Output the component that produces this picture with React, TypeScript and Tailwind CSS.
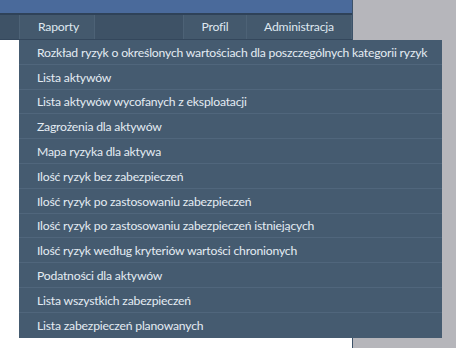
import React from 'react'

const items = [
  'Rozkład ryzyk o określonych wartościach dla poszczególnych kategorii ryzyk',
  'Lista aktywów',
  'Lista aktywów wycofanych z eksploatacji',
  'Zagrożenia dla aktywów',
  'Mapa ryzyka dla aktywa',
  'Ilość ryzyk bez zabezpieczeń',
  'Ilość ryzyk po zastosowaniu zabezpieczeń',
  'Ilość ryzyk po zastosowaniu zabezpieczeń istniejących',
  'Ilość ryzyk według kryteriów wartości chronionych',
  'Podatności dla aktywów',
  'Lista wszystkich zabezpieczeń',
  'Lista zabezpieczeń planowanych',
]

export default function App() {
  return (
    <div
      className="relative flex h-[348px] w-[456px] overflow-hidden bg-[#b6b6bb] text-[12.2px] tracking-[-0.2px]"
      style={{ fontFamily: 'Lato, "Liberation Sans", sans-serif' }}
    >
      <div className="flex w-[353px] flex-col border-r border-[#3d5268] bg-white">
        <div className="h-[13px] bg-[#4a6a9b]" />
        <div className="h-[2px] bg-[#2f4258]" />
        <nav className="flex h-[25px] border-b border-[#34475c] bg-[#3e5266] text-[#dfe8f0]">
          <div className="w-[19px]" />
          <div className="flex w-[76px] items-center border-x border-[#4d6276] bg-[#44596d] pl-[18px]">Raporty</div>
          <div className="flex-1" />
          <div className="flex w-[64px] items-center justify-center border-x border-[#4d6276] bg-[#44596d]">Profil</div>
          <div className="flex w-[105px] items-center justify-center border-r border-[#4d6276] bg-[#44596d]">Administracja</div>
        </nav>
      </div>

      <ul className="absolute left-[19px] top-[40px] w-[423px] bg-[#455b70] text-[#e4ecf3]">
        {items.map((t, i) => (
          <li
            key={t}
            className={`flex h-[24.8px] items-center whitespace-nowrap pl-[18px] pt-[2px] ${i < items.length - 1 ? 'border-b border-[#50667c]' : ''}`}
          >
            {t}
          </li>
        ))}
      </ul>
    </div>
  )
}
